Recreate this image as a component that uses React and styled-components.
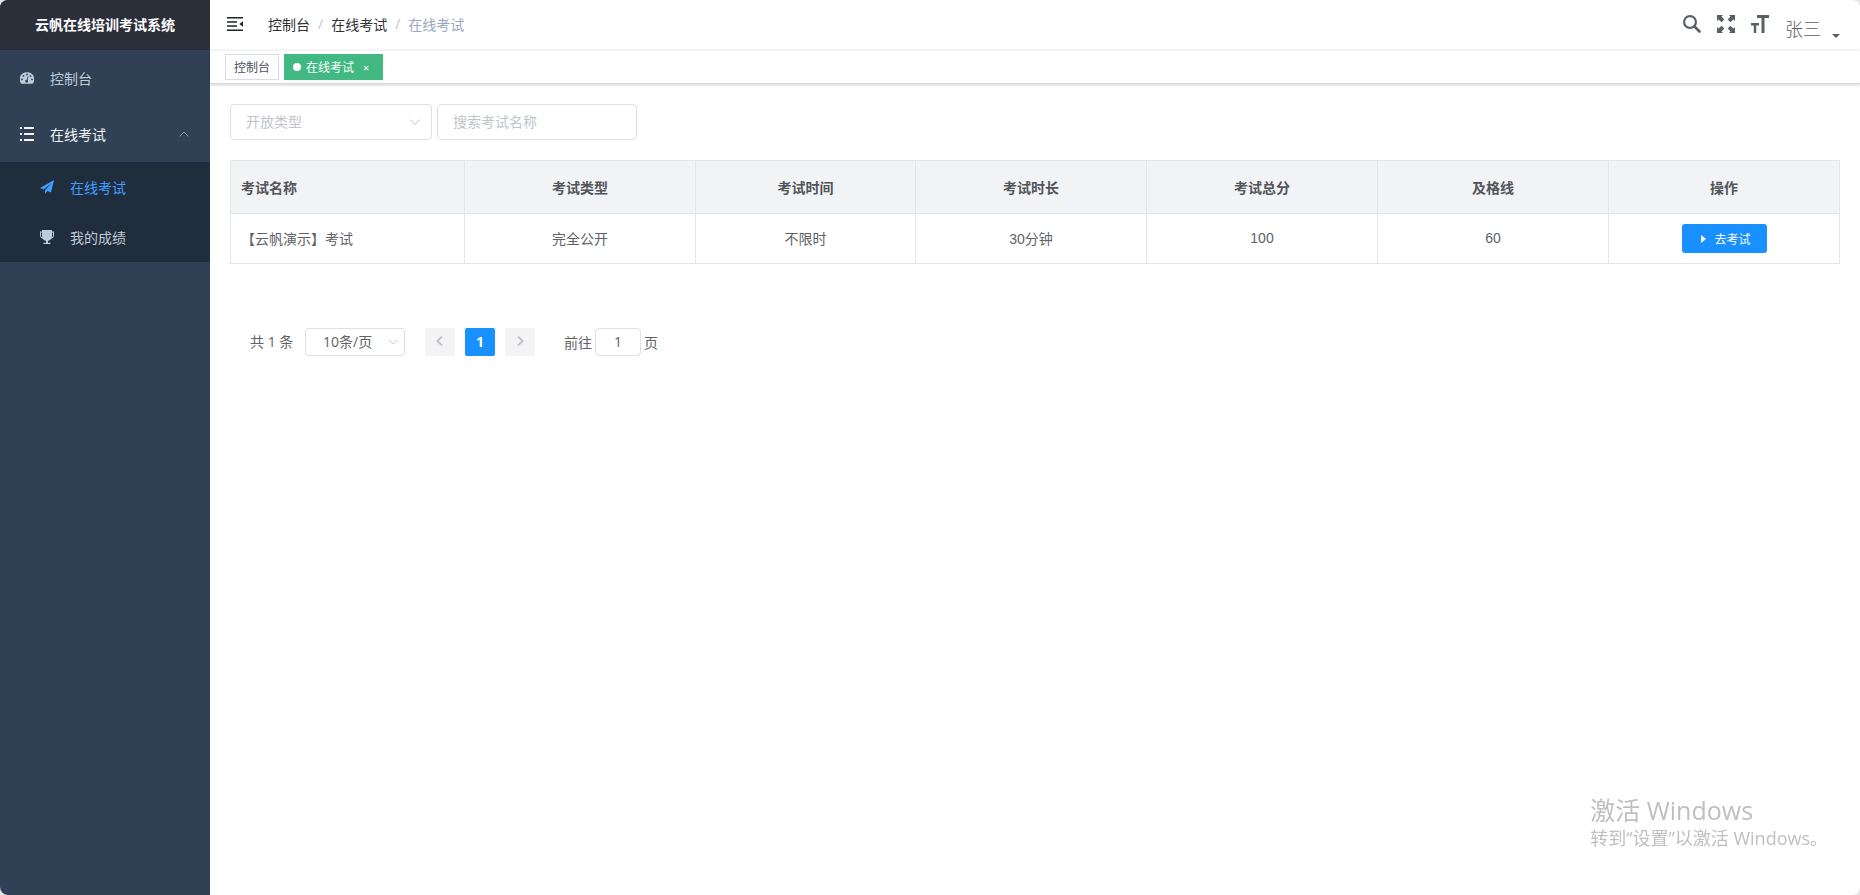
import React, { useState } from 'react';
import styled, { createGlobalStyle } from 'styled-components';

const GlobalStyle = createGlobalStyle`
  * { box-sizing: border-box; }
  html, body, #root { height: 100%; }
  body {
    margin: 0;
    background: #e4e6e8;
    color: #606266;
    font-family: 'Open Sans', 'Noto Sans CJK SC', sans-serif;
    font-size: 14px;
  }
  button, input, select { font-family: inherit; margin: 0; }
  a { color: inherit; text-decoration: none; }
`;

const exams = [
  { id: 1, title: '【云帆演示】考试', type: '完全公开', time: '不限时', duration: '30分钟', total: 100, pass: 60 },
];

const columns = [
  { name: '考试名称', width: 234 },
  { name: '考试类型' },
  { name: '考试时间', width: 220 },
  { name: '考试时长' },
  { name: '考试总分' },
  { name: '及格线' },
  { name: '操作' },
];

/* ---------- icons ---------- */

const DashboardIcon = () => (
  <svg width="14" height="12" viewBox="2 0 124 102" fill="currentColor">
    <path
      fillRule="evenodd"
      d="M64 0a62 62 0 0 0-54 97q2 4 6 4h96q4 0 6-4A62 62 0 0 0 64 0zM20 72a8 8 0 1 1 0-16 8 8 0 0 1 0 16zm13-31a8 8 0 1 1 0-16 8 8 0 0 1 0 16zm31-13a8 8 0 1 1 0-16 8 8 0 0 1 0 16zm10 52a13 13 0 1 1-13-14l8-28 8 2-8 29a13 13 0 0 1 5 11zm21-39a8 8 0 1 1 0-16 8 8 0 0 1 0 16zm13 31a8 8 0 1 1 0-16 8 8 0 0 1 0 16z"
    />
  </svg>
);

const ListIcon = () => (
  <svg width="14" height="14" viewBox="0 0 14 14" fill="currentColor">
    <path d="M0 0h2v2H0zM4 0h10v2H4zM0 6h2v2H0zM4 6h10v2H4zM0 12h2v2H0zM4 12h10v2H4z" />
  </svg>
);

const PlaneIcon = () => (
  <svg width="14" height="14" viewBox="0 0 14 14" fill="currentColor">
    <path d="M14 0 0 8l3.600 1.500L11.500 3 5 10.200V14l2.300-2.900L11 12.600z" />
  </svg>
);

const TrophyIcon = () => (
  <svg width="14" height="14" viewBox="0 0 14 14" fill="currentColor">
    <path
      fillRule="evenodd"
      d="M2 0h10v1.500h2V5c0 2-1 3.300-2.500 3.500-.8 1.200-1.900 2-3.500 2.200v2h2.500V14h-7v-1.300H6v-2c-1.600-.2-2.700-1-3.500-2.200C1 8.300 0 7 0 5V1.500h2zM1 2.500V5c0 1.200.4 2 1.200 2.400L2 6V2.500zm12 0h-1V6l-.2 1.400C12.600 7 13 6.200 13 5z"
    />
  </svg>
);

const FoldIcon = () => (
  <svg width="16" height="14" viewBox="0 0 16 14" fill="#1f2329">
    <path d="M0 0h16v1.600H0zM0 4.200h10v1.600H0zM0 8.200h10v1.600H0zM0 12.400h16V14H0zM16 4.300v5.400L12.300 7z" />
  </svg>
);

const SearchIcon = () => (
  <svg width="18" height="18" viewBox="0 0 18 18" fill="none" stroke="currentColor">
    <circle cx="7" cy="7" r="5.900" strokeWidth="2.200" />
    <path d="m11.500 11.500 5 5" strokeWidth="2.600" strokeLinecap="round" />
  </svg>
);

const FullscreenIcon = () => (
  <svg width="18" height="18" viewBox="0 0 18 18" fill="currentColor">
    <path d="M0 0h6L4.500 1.500 7.300 4.600 4.600 7.300 1.500 4.500 0 6zM18 0v6l-1.500-1.500-3.100 2.800-2.700-2.700 2.800-3.100L12 0zM0 18v-6l1.500 1.500 3.100-2.800 2.700 2.700-2.800 3.100L6 18zM18 18h-6l1.500-1.500-2.800-3.100 2.700-2.700 3.100 2.800L18 12z" />
  </svg>
);

const SizeIcon = () => (
  <svg width="18" height="18" viewBox="0 0 18 18" fill="currentColor">
    <path d="M6 0h12v3h-4.500v15h-3V3H6zM0 8h8v2.500H5.200V18H2.800v-7.500H0z" />
  </svg>
);

const Chevron = ({ d, size = 12, width = 1 }) => (
  <svg width={size} height={size} viewBox="0 0 12 12" fill="none" stroke="currentColor" strokeWidth={width}>
    <path d={d} />
  </svg>
);

const UP = 'M1.500 8.500 6 4l4.500 4.500';
const DOWN = 'M1 3.500 6 8.500l5-5';
const LEFT = 'M8 1.500 3.500 6 8 10.500';
const RIGHT = 'M4 1.500 8.500 6 4 10.500';

/* ---------- layout ---------- */

const Layout = styled.div`
  display: flex;
  min-height: 100%;
  border-radius: 8px;
  overflow: hidden;
  background: #fff;
`;

const Sidebar = styled.aside`
  flex: 0 0 210px;
  background: #304156;
`;

const Brand = styled.h1`
  margin: 0;
  height: 50px;
  line-height: 50px;
  background: #2b2f3a;
  color: #fff;
  font-size: 14px;
  font-weight: 700;
  text-align: center;
`;

const MenuItem = styled.a`
  display: flex;
  align-items: center;
  gap: 16px;
  height: ${(p) => (p.$nested ? 50 : 56)}px;
  padding: 0 20px 0 ${(p) => (p.$nested ? 40 : 20)}px;
  color: ${(p) => p.$color || '#bfcbd9'};

  span { flex: 1; }
`;

const SubMenu = styled.div`
  background: #1f2d3d;
`;

const Arrow = styled.i`
  display: flex;
  color: #909399;
`;

const Main = styled.div`
  flex: 1;
  min-width: 0;
`;

const Navbar = styled.header`
  display: flex;
  align-items: center;
  height: 50px;
  padding: 0 20px 2px 17px;
`;

const IconButton = styled.button`
  display: flex;
  padding: 0;
  border: 0;
  background: none;
  color: #5a5e66;
  cursor: pointer;
`;

const Breadcrumb = styled.nav`
  display: flex;
  gap: 8px;
  margin-left: 25px;
  color: #97a8be;

  a { color: #303133; }
  i { color: #c0c4cc; font-style: normal; }
`;

const Tools = styled.div`
  display: flex;
  align-items: center;
  gap: 16px;
  margin-left: auto;
`;

const UserButton = styled(IconButton)`
  align-items: flex-end;
  gap: 11px;
  padding-top: 10px;
  font-size: 18px;
  font-weight: 300;
  line-height: 26px;

  svg { margin-bottom: 4px; }
`;

const TagBar = styled.div`
  display: flex;
  gap: 5px;
  height: 34px;
  padding: 3px 15px;
  border-top: 1px solid #f0f1f3;
  border-bottom: 1px solid #d8dce5;
  box-shadow: 0 1px 3px rgba(0, 0, 0, 0.2);
`;

const Tag = styled.a`
  display: flex;
  align-items: center;
  height: 26px;
  padding: 0 8px;
  border: 1px solid ${(p) => (p.$active ? '#42b983' : '#d8dce5')};
  background: ${(p) => (p.$active ? '#42b983' : '#fff')};
  color: ${(p) => (p.$active ? '#fff' : '#495060')};
  font-size: 12px;
`;

const Dot = styled.i`
  width: 8px;
  height: 8px;
  margin-right: 5px;
  border-radius: 50%;
  background: #fff;
`;

const TagClose = styled.button`
  width: 16px;
  margin-left: 4px;
  padding: 0;
  border: 0;
  background: none;
  color: inherit;
  font-size: 11px;
`;

const Content = styled.main`
  padding: 20px;
`;

/* ---------- filters ---------- */

const Filters = styled.form`
  display: flex;
  gap: 5px;
  margin-bottom: 20px;
`;

const SelectBox = styled.div`
  display: grid;
  align-items: center;
  width: ${(p) => p.$width}px;
  color: #c0c4cc;

  select, svg { grid-area: 1 / 1; }
  svg { justify-self: end; margin-right: ${(p) => (p.$small ? 7 : 11)}px; pointer-events: none; }
`;

const Select = styled.select`
  appearance: none;
  width: 100%;
  height: ${(p) => (p.$small ? 28 : 36)}px;
  padding: 0 ${(p) => (p.$small ? 17 : 15)}px 2px;
  border: 1px solid #dcdfe6;
  border-radius: ${(p) => (p.$small ? 3 : 4)}px;
  background: #fff;
  color: ${(p) => (p.$small ? '#606266' : '#c0c4cc')};
  font-size: 14px;
`;

const Input = styled.input`
  width: ${(p) => p.$width}px;
  height: ${(p) => (p.$small ? 28 : 36)}px;
  padding: 0 ${(p) => (p.$small ? 3 : 15)}px 2px;
  border: 1px solid #dcdfe6;
  border-radius: 4px;
  color: #606266;
  font-size: 14px;
  text-align: ${(p) => (p.$small ? 'center' : 'left')};

  &::placeholder { color: #c0c4cc; }
`;

/* ---------- table ---------- */

const Table = styled.table`
  width: 100%;
  table-layout: fixed;
  border-collapse: collapse;

  th, td {
    border: 1px solid #dfe6ec;
    padding: 0 10px;
    text-align: center;
  }
  th {
    height: 53px;
    background: #f1f3f5;
    color: #515559;
    font-weight: 700;
  }
  td {
    height: 50px;
    padding-bottom: 2px;
    font-family: 'Liberation Sans', 'Noto Sans CJK SC', sans-serif;
  }
  td:last-child { padding-bottom: 0; }
  th:first-child, td:first-child { text-align: left; }
`;

const StartButton = styled.button`
  display: inline-flex;
  align-items: center;
  justify-content: center;
  gap: 8px;
  width: 85px;
  height: 29px;
  padding: 0 0 0 4px;
  border: 0;
  border-radius: 3px;
  background: #1890ff;
  color: #fff;
  font-size: 12px;
  cursor: pointer;
`;

/* ---------- pagination ---------- */

const Pagination = styled.div`
  display: flex;
  align-items: center;
  margin-top: 64px;
  padding: 0 20px;
`;

const Pager = styled.div`
  display: flex;
  gap: 10px;
  margin: 0 29px 0 20px;
`;

const PageButton = styled.button`
  display: flex;
  align-items: center;
  justify-content: center;
  width: 30px;
  height: 28px;
  padding: 0 0 2px;
  border: 0;
  border-radius: 2px;
  background: ${(p) => (p.$active ? '#1890ff' : '#f4f4f5')};
  color: ${(p) => (p.$active ? '#fff' : '#c0c4cc')};
  font-size: 14px;
  font-weight: 700;
`;

const Total = styled.span`
  width: 55px;
  padding-bottom: 2px;
`;

const Jump = styled.label`
  display: flex;
  align-items: center;
  gap: 3px;
`;

/* ---------- system notice ---------- */

const Activation = styled.div`
  position: fixed;
  right: 32px;
  bottom: 44px;
  color: #bfbfbf;
  pointer-events: none;
`;

const ActivationLine = styled.p`
  margin: 0;
  font-size: ${(p) => (p.$large ? 25 : 18)}px;
  line-height: ${(p) => (p.$large ? 30 : 26)}px;
`;

export default function App() {
  const [type, setType] = useState('');
  const [keyword, setKeyword] = useState('');
  const [page, setPage] = useState('1');

  return (
    <>
      <GlobalStyle />
      <Layout>
        <Sidebar>
          <Brand>云帆在线培训考试系统</Brand>
          <nav>
            <MenuItem href="#dashboard"><DashboardIcon /><span>控制台</span></MenuItem>
            <MenuItem href="#exam" $color="#f4f4f5">
              <ListIcon />
              <span>在线考试</span>
              <Arrow><Chevron d={UP} /></Arrow>
            </MenuItem>
            <SubMenu>
              <MenuItem href="#online" $nested $color="#409eff"><PlaneIcon /><span>在线考试</span></MenuItem>
              <MenuItem href="#record" $nested><TrophyIcon /><span>我的成绩</span></MenuItem>
            </SubMenu>
          </nav>
        </Sidebar>

        <Main>
          <Navbar>
            <IconButton aria-label="收起菜单"><FoldIcon /></IconButton>
            <Breadcrumb>
              <a href="#dashboard">控制台</a>
              <i>/</i>
              <a href="#exam">在线考试</a>
              <i>/</i>
              <span>在线考试</span>
            </Breadcrumb>
            <Tools>
              <IconButton aria-label="搜索"><SearchIcon /></IconButton>
              <IconButton aria-label="全屏"><FullscreenIcon /></IconButton>
              <IconButton aria-label="字号"><SizeIcon /></IconButton>
              <UserButton>
                张三
                <svg width="8" height="4" viewBox="0 0 8 4" fill="currentColor"><path d="M0 0h8L4 4z" /></svg>
              </UserButton>
            </Tools>
          </Navbar>

          <TagBar>
            <Tag href="#dashboard">控制台</Tag>
            <Tag as="div" $active>
              <Dot />
              在线考试
              <TagClose aria-label="关闭">×</TagClose>
            </Tag>
          </TagBar>

          <Content>
            <Filters onSubmit={(e) => e.preventDefault()}>
              <SelectBox $width={202}>
                <Select aria-label="开放类型" value={type} onChange={(e) => setType(e.target.value)}>
                  <option value="">开放类型</option>
                  <option value="1">完全公开</option>
                </Select>
                <Chevron d={DOWN} />
              </SelectBox>
              <Input
                $width={200}
                aria-label="搜索考试名称"
                placeholder="搜索考试名称"
                value={keyword}
                onChange={(e) => setKeyword(e.target.value)}
              />
            </Filters>

            <Table>
              <colgroup>
                {columns.map((col) => <col key={col.name} width={col.width} />)}
              </colgroup>
              <thead>
                <tr>{columns.map((col) => <th key={col.name} scope="col">{col.name}</th>)}</tr>
              </thead>
              <tbody>
                {exams.map((exam) => (
                  <tr key={exam.id}>
                    <td>{exam.title}</td>
                    <td>{exam.type}</td>
                    <td>{exam.time}</td>
                    <td>{exam.duration}</td>
                    <td>{exam.total}</td>
                    <td>{exam.pass}</td>
                    <td>
                      <StartButton>
                        <svg width="5" height="8" viewBox="0 0 5 8" fill="currentColor"><path d="M0 0v8l5-4z" /></svg>
                        去考试
                      </StartButton>
                    </td>
                  </tr>
                ))}
              </tbody>
            </Table>

            <Pagination>
              <Total>共 1 条</Total>
              <SelectBox $width={100} $small>
                <Select $small aria-label="每页条数" defaultValue="10">
                  <option value="10">10条/页</option>
                  <option value="20">20条/页</option>
                </Select>
                <Chevron d={DOWN} size={10} />
              </SelectBox>
              <Pager>
                <PageButton aria-label="上一页" disabled><Chevron d={LEFT} width={2} /></PageButton>
                <PageButton $active>1</PageButton>
                <PageButton aria-label="下一页" disabled><Chevron d={RIGHT} width={2} /></PageButton>
              </Pager>
              <Jump>
                前往
                <Input $width={46} $small value={page} onChange={(e) => setPage(e.target.value)} />
                页
              </Jump>
            </Pagination>
          </Content>
        </Main>
      </Layout>

      <Activation>
        <ActivationLine $large>激活 Windows</ActivationLine>
        <ActivationLine>转到“设置”以激活 Windows。</ActivationLine>
      </Activation>
    </>
  );
}
